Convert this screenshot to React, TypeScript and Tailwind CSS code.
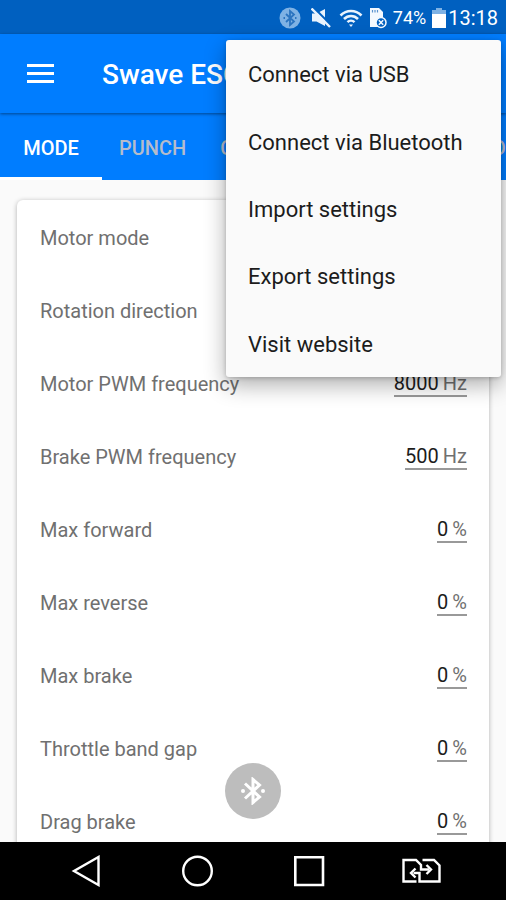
import { useState } from "react";

type Setting = { id: string; label: string; value?: string; unit?: string };

const SETTINGS: Setting[] = [
  { id: "motor-mode", label: "Motor mode" },
  { id: "rotation", label: "Rotation direction" },
  { id: "motor-pwm", label: "Motor PWM frequency", value: "8000", unit: "Hz" },
  { id: "brake-pwm", label: "Brake PWM frequency", value: "500", unit: "Hz" },
  { id: "max-forward", label: "Max forward", value: "0", unit: "%" },
  { id: "max-reverse", label: "Max reverse", value: "0", unit: "%" },
  { id: "max-brake", label: "Max brake", value: "0", unit: "%" },
  { id: "throttle-gap", label: "Throttle band gap", value: "0", unit: "%" },
  { id: "drag-brake", label: "Drag brake", value: "0", unit: "%" },
];

const TABS = ["MODE", "PUNCH", "COMMON", "LIMITS", "TURBO"];

const MENU = [
  "Connect via USB",
  "Connect via Bluetooth",
  "Import settings",
  "Export settings",
  "Visit website",
];

function StatusBar() {
  return (
    <div className="flex h-[34px] shrink-0 items-center justify-end bg-[#0060c0] pr-2 pt-0.5 text-white">
      {/* bluetooth */}
      <svg className="mr-[10px] size-[22px]" viewBox="0 0 22 22" fill="none">
        <circle cx="11" cy="11" r="10.5" fill="#7fb2e4" />
        <path d="M7 7l8 7.5-4 3.5V4l4 3.5L7 15M4.5 11h1.500M16 11h1.500" stroke="#2b74c0" strokeWidth="1.8" />
      </svg>
      {/* muted */}
      <svg className="mr-2 h-5 w-5" viewBox="0 0 20 20" fill="none">
        <path d="M1 5.500h4.500L14 1v17l-8.500-4.500H1z" fill="#e9f3fd" />
        <path d="M2-1l18.500 18.500" stroke="#0060c0" strokeWidth="2.200" />
        <path d="M.5.5l18.500 18.500" stroke="#e9f3fd" strokeWidth="2.400" />
      </svg>
      {/* wifi */}
      <svg className="mr-1.5 h-5 w-6" viewBox="0 0 24 20" fill="none" stroke="#e9f3fd" strokeWidth="2.600">
        <path d="M1.500 7.500c6-6 15-6 21 0M5 11c4-4 10-4 14 0M8.500 14.200c2-2 5-2 7 0" />
        <path d="M10 16.500h4l-2 2.500z" fill="#e9f3fd" stroke="none" />
      </svg>
      {/* sim card */}
      <svg className="mr-1.5 h-[22px] w-[18px]" viewBox="0 0 18 22" fill="none">
        <path d="M1 1h9l4 4v15H1z" fill="#f4f9ff" />
        <path d="M3.500 3v2.500M6 3v2.500M8.500 3v2.500" stroke="#5b93cf" strokeWidth="1.200" />
        <circle cx="12" cy="15.500" r="5" fill="#0060c0" stroke="#f4f9ff" strokeWidth="1.500" />
        <path d="M9.800 13.300l4.400 4.400M14.200 13.300l-4.400 4.400" stroke="#f4f9ff" strokeWidth="1.500" />
      </svg>
      <span className="text-[18px] leading-6">74%</span>
      {/* battery */}
      <svg className="ml-1.5 mr-0.5 h-5 w-[14px]" viewBox="0 0 14 20">
        <path d="M4 0h6v2h4v5H0V2h4z" fill="#7fb2e4" />
        <path d="M0 6h14v14H0z" fill="#fff" />
      </svg>
      <span className="text-[20px] leading-6">13:18</span>
    </div>
  );
}

function OverflowMenu() {
  return (
    <div
      role="menu"
      className="absolute right-[5px] top-[40px] z-30 flex h-[337px] w-[275px] flex-col rounded-[3px] bg-[#fafafa] shadow-[0_8px_22px_rgba(0,0,0,0.32),0_1px_4px_rgba(0,0,0,0.2)]"
    >
      {MENU.map((item) => (
        <button
          key={item}
          role="menuitem"
          className="flex flex-1 items-center px-[22px] pt-[3px] text-left text-[22px] leading-7 text-[#1c1c1c]"
        >
          {item}
        </button>
      ))}
    </div>
  );
}

function SettingRow({ setting }: { setting: Setting }) {
  const [value, setValue] = useState(setting.value ?? "");

  if (!setting.unit) {
    return (
      <div className="flex h-[73px] items-center text-[20px] leading-6 text-[#707070]">
        {setting.label}
      </div>
    );
  }

  return (
    <div className="flex h-[73px] items-center justify-between text-[20px] leading-6 text-[#707070]">
      <label htmlFor={setting.id}>{setting.label}</label>
      <div className="flex gap-1 border-b-2 border-[#999]">
        <input
          id={setting.id}
          inputMode="numeric"
          className="bg-transparent text-[#1c1c1c] outline-none"
          style={{ width: `${value.length}ch` }}
          value={value}
          onChange={(e) => setValue(e.target.value)}
        />
        <span>{setting.unit}</span>
      </div>
    </div>
  );
}

function NavBar() {
  return (
    <nav className="grid h-[58px] shrink-0 grid-cols-4 bg-black px-[29px] text-white">
      <button aria-label="Back" className="flex items-center justify-center">
        <svg className="h-8 w-8" viewBox="0 0 32 32" fill="none" stroke="currentColor" strokeWidth="2.400">
          <path d="M29.500 2v28L5 16z" />
        </svg>
      </button>
      <button aria-label="Home" className="flex items-center justify-center">
        <svg className="h-8 w-8" viewBox="0 0 32 32" fill="none" stroke="currentColor" strokeWidth="2.400">
          <circle cx="16.500" cy="16" r="14.300" />
        </svg>
      </button>
      <button aria-label="Recent apps" className="flex items-center justify-center">
        <svg className="h-8 w-8" viewBox="0 0 32 32" fill="none" stroke="currentColor" strokeWidth="2.600">
          <path d="M2.300 2.300h27.700v27.700H2.300z" />
        </svg>
      </button>
      <button aria-label="Switch SIM" className="flex items-center justify-center">
        <svg className="h-[26px] w-10" viewBox="0 0 40 26" fill="none" stroke="currentColor" strokeWidth="2.400">
          <path d="M15.500 23.500H2.500V2H15l5 5v4.500h8" />
          <path d="M21.500 2H33l5.500 5.500v16H18.500v-8.500h-6" />
          <path d="M25.500 7l4.500 4.500-4.500 4.500M14.500 10.500L10 15l4.500 4.500" />
        </svg>
      </button>
    </nav>
  );
}

export default function App() {
  return (
    <div className="relative flex h-screen flex-col overflow-hidden bg-[#fafafa] font-['Roboto',sans-serif]">
      <StatusBar />

      <header className="z-10 flex h-[79px] shrink-0 items-center bg-[#007dff] px-[27px] text-white shadow-[0_1px_3px_rgba(0,0,0,0.45)]">
        <button aria-label="Open menu" className="mr-12 flex w-[27px] flex-col gap-[5px]">
          <span className="h-[3px] w-full bg-white" />
          <span className="h-[3px] w-full bg-white" />
          <span className="h-[3px] w-full bg-white" />
        </button>
        <h1 className="pt-0.5 text-[28px] font-medium leading-9">Swave ESC</h1>
      </header>

      <div role="tablist" className="flex h-[67px] shrink-0 overflow-hidden bg-[#007dff]">
        {TABS.map((tab, i) => (
          <button
            key={tab}
            role="tab"
            aria-selected={i === 0}
            className={
              i === 0
                ? "min-w-[102px] shrink-0 border-b-[3px] border-white px-[17px] pt-[5px] text-[20px] font-medium text-white"
                : "shrink-0 border-b-[3px] border-transparent px-[17px] pt-[5px] text-[20px] font-medium text-[#b5bccb]"
            }
          >
            {tab}
          </button>
        ))}
      </div>

      <main className="relative min-h-0 flex-1 overflow-hidden px-[17px] pt-5">
        <section className="rounded-md bg-white pl-[23px] pr-[22px] pt-px shadow-[0_1px_5px_rgba(0,0,0,0.3)]">
          {SETTINGS.map((s) => (
            <SettingRow key={s.id} setting={s} />
          ))}
        </section>

        <button
          aria-label="Bluetooth connection"
          className="absolute bottom-[23px] left-1/2 flex size-14 -translate-x-1/2 items-center justify-center rounded-full bg-[#bdbdbd]"
        >
          <svg className="size-7" viewBox="0 0 28 28" fill="none" stroke="#fff" strokeWidth="3">
            <path d="M6 6.500l14.500 13.500-6.500 5.500V2.500l6.500 5.500L6 21.500" />
            <circle cx="4" cy="14" r="2" fill="#fff" stroke="none" />
            <circle cx="24" cy="14" r="2" fill="#fff" stroke="none" />
          </svg>
        </button>
      </main>

      <NavBar />
      <OverflowMenu />
    </div>
  );
}
